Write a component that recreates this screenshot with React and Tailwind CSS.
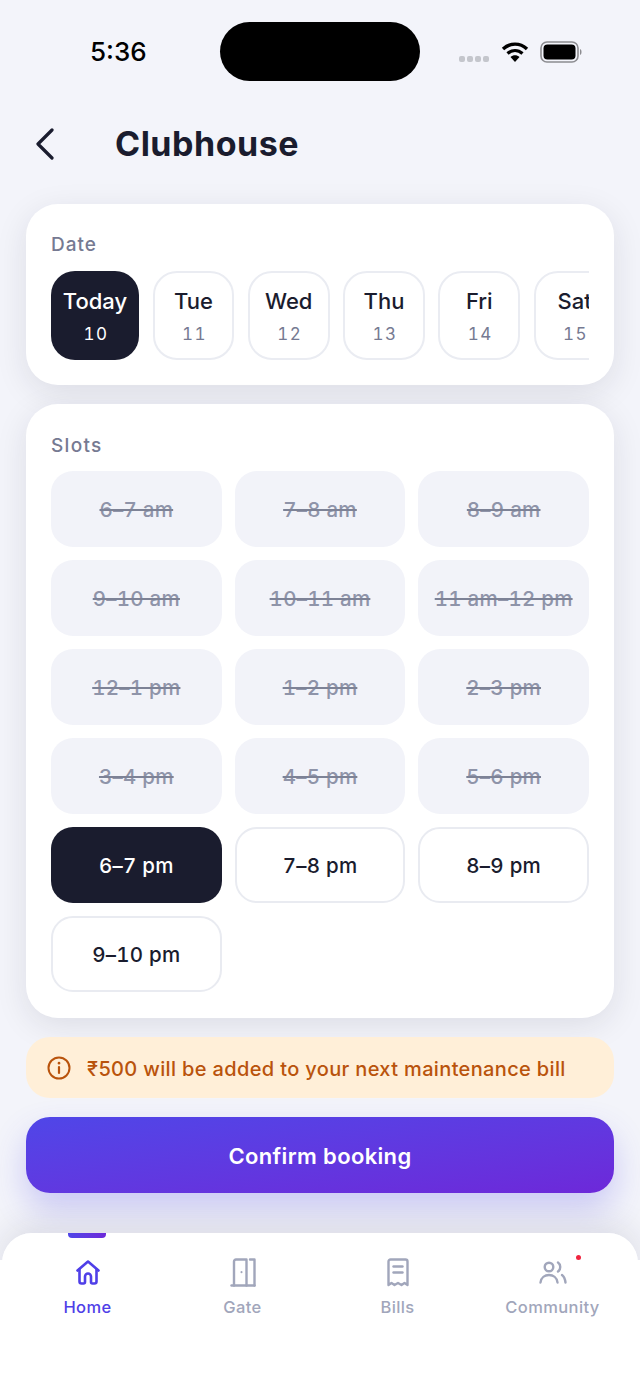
const dates = [["Tue","11"],["Wed","12"],["Thu","13"],["Fri","14"],["Sat","15"]];
const off = ["6–7 am","7–8 am","8–9 am","9–10 am","10–11 am","11 am–12 pm","12–1 pm","1–2 pm","2–3 pm","3–4 pm","4–5 pm","5–6 pm"];
const on = ["7–8 pm","8–9 pm"];

function Slot({ label, kind }) {
  const cls = kind === "off"
    ? "bg-[#f2f3f9] text-[#8f94a9] line-through decoration-[#7d8296] font-medium"
    : kind === "sel"
    ? "bg-[#1a1c2e] text-white font-medium"
    : "bg-white text-[#1a1c2e] border-2 border-[#e9ebf1] font-medium";
  return (
    <div className={`h-[76px] pt-[2px] rounded-[22px] flex items-center justify-center text-[20.5px] tracking-[0.25px] tabular-nums ${cls}`}>
      {label}
    </div>
  );
}

function NavItem({ label, active, children }) {
  return (
    <div className="w-[155px] flex flex-col items-center">
      <div className="h-[36px] flex items-center justify-center">{children}</div>
      <div className={`mt-[7px] text-[16.5px] leading-[20px] font-medium tracking-[0.4px] ${active ? "text-[#4f3fe8]" : "text-[#a1a6bb]"}`}>{label}</div>
    </div>
  );
}

export default function App() {
  return (
    <div className="relative w-[640px] h-[1391px] overflow-hidden bg-[#f3f4fa] font-['Inter',sans-serif]">
      {/* Status bar */}
      <div className="h-[104px] relative flex items-start">
        <div className="absolute left-[90px] top-[37px] text-[26px] leading-[30px] font-medium text-black">5:36</div>
        <div className="absolute left-[220px] top-[22px] w-[200px] h-[59px] rounded-[30px] bg-black" />
        <div className="absolute left-[459px] top-[56px] flex gap-[2px]">
          {[0,1,2,3].map(i => <div key={i} className="w-[6px] h-[6px] rounded-[2px] bg-[#c4c6cc]" />)}
        </div>
        <svg className="absolute left-[501px] top-[41px]" width="28" height="22" viewBox="0 0 28 22" fill="none">
          <path d="M2 8 C9 1.5 19 1.5 26 8" stroke="#000" strokeWidth="3.4" />
          <path d="M6.5 12.5 C11 8.5 17 8.5 21.5 12.5" stroke="#000" strokeWidth="3.2" />
          <path d="M9.5 16 L14 21 L18.5 16 C16 13.5 12 13.5 9.5 16Z" fill="#000" />
        </svg>
        <svg className="absolute left-[540px] top-[41px]" width="44" height="22" viewBox="0 0 44 22" fill="none">
          <rect x="1" y="1" width="37" height="20" rx="6" stroke="#8c8c90" strokeWidth="1.6" />
          <rect x="3.5" y="3.5" width="32" height="15" rx="4" fill="#000" />
          <path d="M40 8 C42 8.5 42 13.5 40 14Z" fill="#8c8c90" />
        </svg>
      </div>

      {/* Header */}
      <div className="h-[80px] flex items-center pl-[35px]">
        <svg width="20" height="32" viewBox="0 0 20 32" fill="none">
          <path d="M17 2 L3 16 L17 30" stroke="#1a1c2e" strokeWidth="3.2" strokeLinecap="round" strokeLinejoin="round" />
        </svg>
        <h1 className="ml-[60px] text-[34px] leading-[40px] font-bold text-[#1a1c2e] tracking-[0.5px]">Clubhouse</h1>
      </div>

      <div className="mt-[20px] px-[26px] flex flex-col">
        {/* Date card */}
        <div className="h-[181px] rounded-[32px] bg-white shadow-[0_8px_32px_rgba(26,28,46,0.1)] pl-[25px] pr-[25px] pt-[29px]">
          <div className="text-[19px] leading-[24px] font-medium text-[#767a92] tracking-[1px]">Date</div>
          <div className="mt-[14px] flex gap-[13.5px] overflow-hidden">
            <div className="shrink-0 w-[88px] h-[89px] rounded-[24px] bg-[#1a1c2e] flex flex-col items-center text-white">
              <div className="mt-[15px] text-[22px] leading-[30px] font-medium">Today</div>
              <div className="mt-[6px] pl-[2px] text-[17px] leading-[24px] tracking-[1.5px] tabular-nums">10</div>
            </div>
            {dates.map(([d, n]) => (
              <div key={d} className="shrink-0 w-[81.8px] h-[89px] rounded-[24px] border-2 border-[#eaecf2] bg-white flex flex-col items-center">
                <div className="mt-[13px] text-[22px] leading-[30px] font-medium text-[#1a1c2e]">{d}</div>
                <div className="mt-[6px] pl-[2px] text-[17px] leading-[24px] tracking-[1.5px] tabular-nums text-[#767a92]">{n}</div>
              </div>
            ))}
          </div>
        </div>

        {/* Slots card */}
        <div className="mt-[19px] h-[614px] rounded-[32px] bg-white shadow-[0_8px_32px_rgba(26,28,46,0.1)] px-[25px] pt-[30px]">
          <div className="text-[19px] leading-[24px] font-medium text-[#767a92] tracking-[1.3px]">Slots</div>
          <div className="mt-[13px] grid grid-cols-3 gap-x-[13px] gap-y-[13px]">
            {off.map(s => <Slot key={s} label={s} kind="off" />)}
            <Slot label="6–7 pm" kind="sel" />
            {on.map(s => <Slot key={s} label={s} />)}
            <Slot label="9–10 pm" />
          </div>
        </div>

        {/* Notice */}
        <div className="mt-[19px] h-[61px] rounded-[24px] bg-[#ffefd8] flex items-center pl-[21px]">
          <svg width="24" height="24" viewBox="0 0 24 24" fill="none" stroke="#b9530c" strokeWidth="2" strokeLinecap="round">
            <circle cx="12" cy="12" r="10.5" />
            <path d="M12 11 V17" strokeWidth="2.2" />
            <path d="M12 7 V7.2" strokeWidth="2.6" />
          </svg>
          <span className="ml-[16px] pt-[2px] text-[20px] font-medium text-[#b9530c] tracking-[0.35px]">₹500 will be added to your next maintenance bill</span>
        </div>

        {/* Button */}
        <div className="mt-[19px] h-[76px] pt-[2px] rounded-[24px] bg-gradient-to-br from-[#4f46e8] to-[#6d28d9] shadow-[0_16px_32px_rgba(79,70,232,0.25)] flex items-center justify-center text-white text-[22px] font-semibold tracking-[0.35px]">
          Confirm booking
        </div>
      </div>

      {/* Bottom nav */}
      <div className="absolute left-[2px] right-[2px] bottom-0 h-[158px] rounded-t-[30px] shadow-[0_-8px_32px_rgba(26,28,46,0.1)]" />
      <div className="absolute left-0 right-0 bottom-0 h-[131px] bg-white" />
      <div className="absolute left-[2px] right-[2px] bottom-0 h-[158px] bg-white rounded-t-[30px] pl-[8px] pt-[21px] flex items-start">
        <div className="absolute left-[66px] top-0 w-[38px] h-[5px] rounded-b-[4px] bg-gradient-to-r from-[#4f46e8] to-[#6d28d9]" />
        <NavItem label="Home" active>
          <svg width="24" height="25" viewBox="0 0 24 25" fill="none" stroke="#4f3fe8" strokeWidth="2.6" strokeLinejoin="round" strokeLinecap="round">
            <path d="M1.5 10.5 L12 1.5 L22.5 10.5" />
            <path d="M3.5 9.5 V21.5 A2 2 0 0 0 5.5 23.5 H7.5 A1.5 1.5 0 0 0 9 22 V16.5 A3 3 0 0 1 15 16.5 V22 A1.5 1.5 0 0 0 16.5 23.5 H18.5 A2 2 0 0 0 20.5 21.5 V9.5" />
          </svg>
        </NavItem>
        <NavItem label="Gate">
          <svg width="26" height="29" viewBox="0 0 26 29" fill="none" stroke="#a1a6bb" strokeWidth="2.4" strokeLinecap="round" strokeLinejoin="round">
            <path d="M1.5 27.5 H24.5" />
            <path d="M4 27.5 V3.5 A2 2 0 0 1 6 1.5 H16.5 V27.5" />
            <path d="M20 1.5 H24.5 V27.5" />
            <path d="M11.5 14 V14.2" strokeWidth="2" />
          </svg>
        </NavItem>
        <NavItem label="Bills">
          <svg width="22" height="29" viewBox="0 0 22 29" fill="none" stroke="#a1a6bb" strokeWidth="2.4" strokeLinecap="round" strokeLinejoin="round">
            <path d="M1.5 27 V3.5 A2 2 0 0 1 3.5 1.5 H18.5 A2 2 0 0 1 20.5 3.5 V27 L17.5 25 L14.5 27 L11 25 L7.5 27 L4.5 25 Z" />
            <path d="M6.5 8.5 H15.5" />
            <path d="M6.5 14.5 H15.5" />
          </svg>
        </NavItem>
        <NavItem label="Community">
          <svg width="28" height="23" viewBox="0 0 28 23" fill="none" stroke="#a1a6bb" strokeWidth="2.4" strokeLinecap="round">
            <circle cx="10" cy="6" r="4.3" />
            <path d="M1.5 21.5 C2.5 11.5 17.5 11.5 18.5 21.5" />
            <path d="M19 1.5 C22 3.5 22 8.5 19 10.5" />
            <path d="M26.5 21.5 C26 17.5 25 15.5 23 14" />
          </svg>
        </NavItem>
        <div className="absolute left-[573.5px] top-[21.5px] w-[5px] h-[5px] rounded-full bg-[#f0243f]" />
      </div>
    </div>
  );
}
